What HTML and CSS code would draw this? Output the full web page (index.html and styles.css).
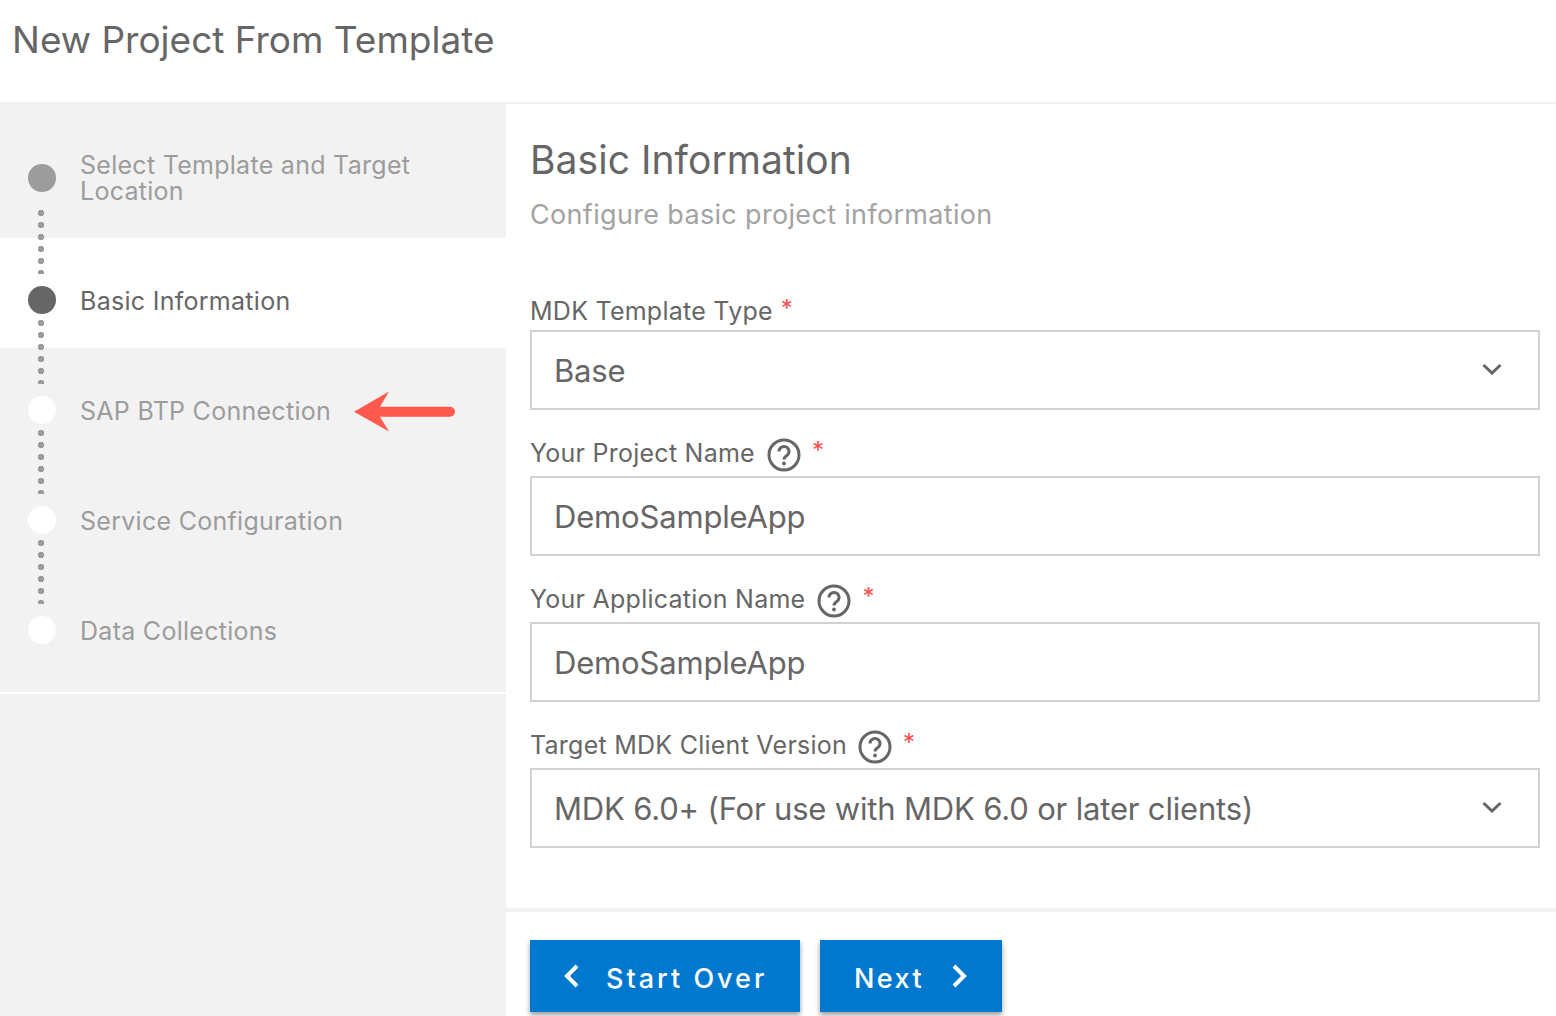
FILE: index.html
```html
<!DOCTYPE html>
<html lang="en">
<head>
<meta charset="utf-8">
<title>New Project From Template</title>
<link rel="stylesheet" href="styles.css">
</head>
<body>
<header class="page-header"><h1>New Project From Template</h1></header>
<div class="wizard">
  <aside class="sidebar">
    <ol class="steps">
      <li class="step step-first step-done"><span class="dot"></span><span class="step-label">Select Template and Target Location</span><span class="connector"></span></li>
      <li class="step step-active"><span class="dot"></span><span class="step-label">Basic Information</span><span class="connector"></span></li>
      <li class="step"><span class="dot"></span><span class="step-label">SAP BTP Connection</span><span class="connector"></span>
        <svg class="arrow" width="104" height="42" viewBox="0 0 104 42"><path d="M1 21.700 L36 1.500 L27 16.700 H97 a5 5 0 0 1 0 10 H27 L36 41.500 Z" fill="#ff5a4d"/></svg>
      </li>
      <li class="step"><span class="dot"></span><span class="step-label">Service Configuration</span><span class="connector"></span></li>
      <li class="step"><span class="dot"></span><span class="step-label">Data Collections</span></li>
    </ol>
  </aside>
  <main class="content">
    <div class="form-area">
      <h2>Basic Information</h2>
      <p class="subtitle">Configure basic project information</p>
      <div class="field field-first">
        <div class="label"><span>MDK Template Type</span><span class="req">*</span></div>
        <div class="control"><span>Base</span><svg class="chev" width="20" height="12" viewBox="0 0 20 12"><path d="M1.5 2 L10 10 L18.500 2" fill="none" stroke="#666" stroke-width="3"/></svg></div>
      </div>
      <div class="field">
        <div class="label"><span>Your Project Name</span>
          <svg class="help" width="34" height="34" viewBox="0 0 34 34"><circle cx="17" cy="17" r="15" fill="none" stroke="#666" stroke-width="3"/><path d="M12 13.500a5 5 0 1 1 7.800 4.100c-1.800 1.200-2.800 2-2.800 4" fill="none" stroke="#666" stroke-width="3"/><circle cx="17" cy="25.500" r="1.900" fill="#666"/></svg>
          <span class="req">*</span></div>
        <div class="control"><span>DemoSampleApp</span></div>
      </div>
      <div class="field">
        <div class="label"><span>Your Application Name</span>
          <svg class="help" width="34" height="34" viewBox="0 0 34 34"><circle cx="17" cy="17" r="15" fill="none" stroke="#666" stroke-width="3"/><path d="M12 13.500a5 5 0 1 1 7.800 4.100c-1.800 1.200-2.800 2-2.800 4" fill="none" stroke="#666" stroke-width="3"/><circle cx="17" cy="25.500" r="1.900" fill="#666"/></svg>
          <span class="req">*</span></div>
        <div class="control"><span>DemoSampleApp</span></div>
      </div>
      <div class="field">
        <div class="label"><span>Target MDK Client Version</span>
          <svg class="help help-tight" width="34" height="34" viewBox="0 0 34 34"><circle cx="17" cy="17" r="15" fill="none" stroke="#666" stroke-width="3"/><path d="M12 13.500a5 5 0 1 1 7.800 4.100c-1.800 1.200-2.800 2-2.800 4" fill="none" stroke="#666" stroke-width="3"/><circle cx="17" cy="25.500" r="1.900" fill="#666"/></svg>
          <span class="req">*</span></div>
        <div class="control"><span>MDK 6.0+ (For use with MDK 6.0 or later clients)</span><svg class="chev" width="20" height="12" viewBox="0 0 20 12"><path d="M1.5 2 L10 10 L18.500 2" fill="none" stroke="#666" stroke-width="3"/></svg></div>
      </div>
    </div>
    <footer class="actions">
      <button class="btn btn-back"><svg width="16" height="24" viewBox="0 0 16 24"><path d="M14 2 L4 12 L14 22" fill="none" stroke="#fff" stroke-width="4"/></svg><span class="btn-text">Start Over</span></button>
      <button class="btn btn-next"><span class="btn-text">Next</span><svg width="16" height="24" viewBox="0 0 16 24"><path d="M2 2 L12 12 L2 22" fill="none" stroke="#fff" stroke-width="4"/></svg></button>
    </footer>
  </main>
</div>
</body>
</html>
```
FILE: styles.css
```css
* { box-sizing: border-box; }
html, body { margin: 0; padding: 0; height: 100%; }
body {
  width: 1556px;
  height: 1016px;
  overflow: hidden;
  background: #fff;
  color: #666;
  font-family: Inter, "Liberation Sans", sans-serif;
  display: flex;
  flex-direction: column;
}
.page-header { height: 102px; padding: 15px 0 0 12px; }
h1 { margin: 0; font-size: 37px; line-height: 50px; font-weight: 400; }
.wizard { flex: 1; display: flex; min-height: 0; }
.sidebar { width: 506px; background: #f2f2f2; flex: none; }
.steps { list-style: none; margin: 0; padding: 0 0 14px; border-bottom: 2px solid #fff; height: 592px; }
.step {
  position: relative;
  height: 110px;
  display: flex;
  align-items: center;
  padding-left: 28px;
  padding-top: 14px;
  font-size: 25px;
  letter-spacing: 0.28px;
  color: #9c9c9c;
}
.step-first { height: 136px; padding-top: 16px; }
.step-active { background: #fff; color: #666; }
.dot { width: 28px; height: 28px; border-radius: 50%; background: #fff; flex: none; margin-right: 24px; }
.step-done .dot { background: #9c9c9c; }
.step-active .dot { background: #666; }
.step-label { line-height: 26px; width: 400px; padding-top: 2px; }
.step-first .step-label { padding-top: 0; }
.connector {
  position: absolute;
  left: 38px;
  top: 82px;
  width: 6px;
  height: 64px;
  z-index: 1;
  background: radial-gradient(circle at 3px 3px, #9c9c9c 2.900px, transparent 3.300px) 0 0 / 6px 12px repeat-y;
}
.step-first .connector { top: 108px; }
.arrow { position: absolute; left: 353px; top: 42px; }
.content { flex: 1; display: flex; flex-direction: column; border-top: 2px solid #f2f2f2; min-width: 0; }
.form-area { height: 808px; padding: 32px 16px 0 24px; border-bottom: 4px solid #f2f2f2; }
h2 { margin: 0; font-size: 39px; line-height: 48px; font-weight: 400; letter-spacing: 0.05px; }
.subtitle { margin: 13px 0 0; font-size: 27px; line-height: 36px; letter-spacing: 0.33px; color: #a3a3a3; }
.field { margin-top: 20px; }
.field-first { margin-top: 59px; }
.label { height: 46px; display: flex; align-items: center; font-size: 25px; letter-spacing: 0.25px; }
.field-first .label { height: 38px; }
.help { margin-left: 12px; margin-top: 4px; }
.help-tight { margin-left: 11px; }
.req { color: #ff4d4d; margin-left: 11px; font-size: 24px; position: relative; top: -3px; }
.field-first .req { margin-left: 8px; }
.control {
  height: 80px;
  border: 2px solid #d2d2d2;
  display: flex;
  align-items: center;
  justify-content: space-between;
  padding: 0 36px 0 22px;
  font-size: 31px;
  letter-spacing: -0.17px;
}
.chev { position: relative; top: -1px; }
.actions { flex: 1; display: flex; gap: 20px; padding: 28px 0 0 24px; }
.btn {
  height: 72px;
  border: 0;
  background: #0078cf;
  color: #fff;
  font-family: inherit;
  font-size: 27px;
  font-weight: 500;
  letter-spacing: 3px;
  display: flex;
  align-items: center;
  box-shadow: 0 3px 5px rgba(0,0,0,.4);
}
.btn-text { padding-top: 5px; }
.btn-back { width: 270px; padding: 0 0 0 33px; gap: 27px; }
.btn-next { width: 182px; padding: 0 0 0 34px; gap: 28px; letter-spacing: 2.400px; }
```
